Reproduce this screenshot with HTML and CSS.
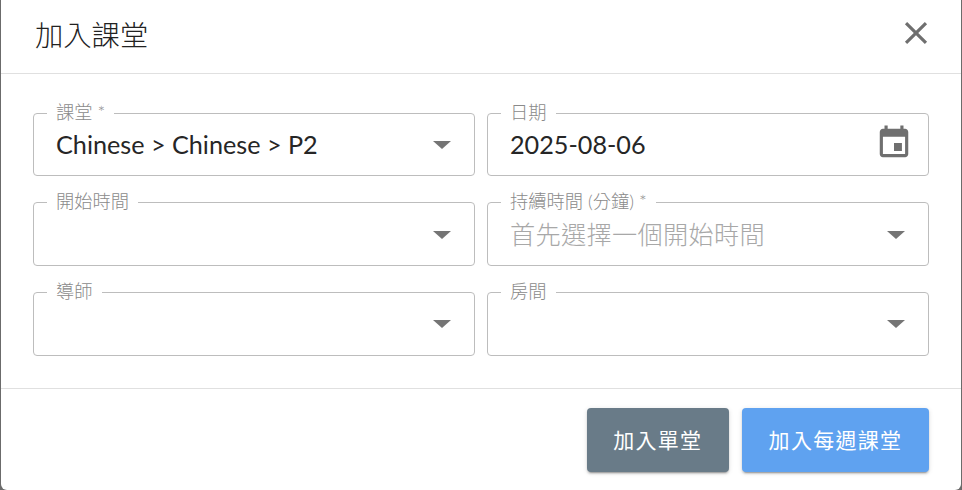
FILE: index.html
```html
<!DOCTYPE html>
<html lang="zh-Hant">
<head>
<meta charset="utf-8">
<title>加入課堂</title>
<link rel="stylesheet" href="styles.css">
</head>
<body>
<div class="dialog">
  <header class="head">
    <h2 class="title">加入課堂</h2>
    <button class="close" aria-label="關閉">
      <svg viewBox="0 0 24 24" width="38" height="38"><path d="M19 6.41 17.59 5 12 10.59 6.41 5 5 6.41 10.59 12 5 17.59 6.41 19 12 13.41 17.59 19 19 17.59 13.41 12z"/></svg>
    </button>
  </header>
  <main class="body">
    <fieldset class="field"><legend>課堂 *</legend><span class="value">Chinese &gt; Chinese &gt; P2</span><i class="caret"></i></fieldset>
    <fieldset class="field"><legend>日期</legend><span class="value">2025-08-06</span>
      <svg class="cal" viewBox="0 0 24 24" width="38" height="38"><path d="M17 12h-5v5h5v-5zM16 1v2H8V1H6v2H5c-1.11 0-1.99.9-1.99 2L3 19c0 1.1.89 2 2 2h14c1.1 0 2-.9 2-2V5c0-1.1-.9-2-2-2h-1V1h-2zm3 18H5V8h14v11z"/></svg>
    </fieldset>
    <fieldset class="field"><legend>開始時間</legend><span class="value"></span><i class="caret"></i></fieldset>
    <fieldset class="field"><legend>持續時間 (分鐘) *</legend><span class="value placeholder">首先選擇一個開始時間</span><i class="caret"></i></fieldset>
    <fieldset class="field"><legend>導師</legend><span class="value"></span><i class="caret"></i></fieldset>
    <fieldset class="field"><legend>房間</legend><span class="value"></span><i class="caret"></i></fieldset>
  </main>
  <footer class="foot">
    <button class="btn grey">加入單堂</button>
    <button class="btn blue">加入每週課堂</button>
  </footer>
</div>
</body>
</html>
```
FILE: styles.css
```css
* { box-sizing: border-box; }
html, body { margin: 0; height: 100%; }
body {
  background: #6b6b6b;
  overflow: hidden;
  font-family: Lato, "Noto Sans CJK TC", sans-serif;
  padding: 0 1px;
}
.dialog {
  height: 490px;
  background: #fff;
  border-radius: 0 0 6px 6px;
  display: flex;
  flex-direction: column;
}
.head {
  height: 74px;
  border-bottom: 1px solid #e0e0e0;
  display: flex;
  align-items: center;
  justify-content: space-between;
  padding: 0 26px 7px 34px;
}
.title {
  margin: 0;
  font-size: 28.3px;
  font-weight: 300;
  color: #222;
}
.close {
  background: none;
  border: 0;
  padding: 0;
  display: flex;
  fill: #6f6f6f;
}
.body {
  height: 315px;
  border-bottom: 1px solid #e0e0e0;
  padding: 27.8px 32px 0;
  display: grid;
  grid-template-columns: 442px 442px;
  column-gap: 12px;
  grid-auto-rows: 74.6px;
  row-gap: 15px;
  align-content: start;
}
.field {
  margin: 0;
  padding: 0 22px 10px;
  min-width: 0;
  border: 1px solid #bdbdbd;
  border-radius: 4px;
  display: flex;
  align-items: center;
  justify-content: space-between;
}
.field legend {
  padding: 0 9px 2px;
  margin-left: -9px;
  font-size: 18.3px;
  font-weight: 300;
  line-height: 21px;
  color: #8a8a8a;
  white-space: nowrap;
}
.value {
  font-size: 25.2px;
  line-height: 32px;
  color: #262626;
  margin-bottom: 2px;
}
.placeholder { color: #a8a8a8; font-weight: 300; letter-spacing: .3px; }
.caret {
  border-left: 9px solid transparent;
  border-right: 9px solid transparent;
  border-top: 8px solid #757575;
  margin-right: 1px;
}
.cal { fill: #6f6f6f; margin: 0 -7px 4px 0; }
.foot {
  flex: 1;
  display: flex;
  justify-content: flex-end;
  gap: 13px;
  padding: 19px 32px 0 0;
  align-items: flex-start;
}
.btn {
  height: 64px;
  border: 0;
  border-radius: 4px;
  color: #fff;
  font-family: inherit;
  font-size: 21px;
  letter-spacing: 1.3px;
  padding: 0 26.6px 3px;
  box-shadow: 0 3px 1px -2px rgba(0,0,0,.2), 0 2px 2px rgba(0,0,0,.14), 0 1px 5px rgba(0,0,0,.12);
}
.grey { background: #697b88; }
.blue { background: #5fa2f0; }
```
